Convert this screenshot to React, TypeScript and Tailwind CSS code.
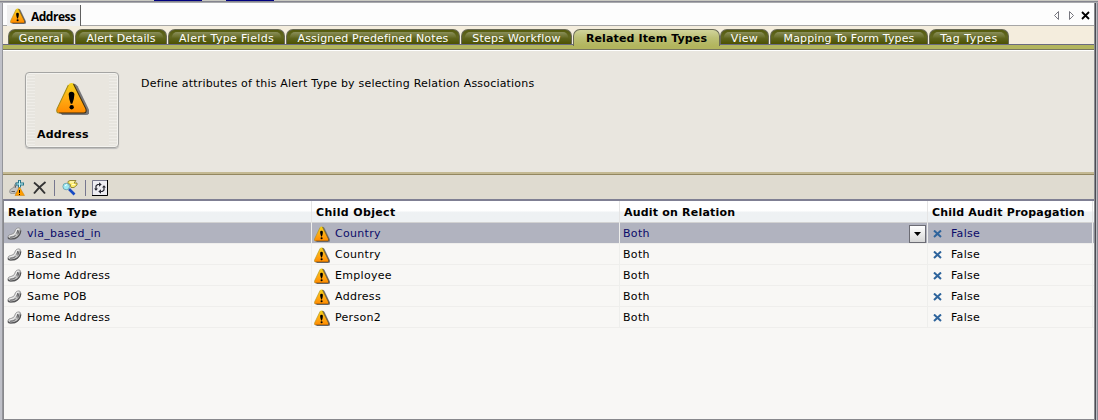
import React from "react";

function Warning({ className }: { className: string }) {
  return (
    <svg viewBox="0 0 32 32" className={className}>
      <defs>
        <linearGradient id="amber" x1="0" y1="0" x2="0" y2="1">
          <stop offset="0" stopColor="#f2d21c" />
          <stop offset="0.5" stopColor="#ffae14" />
          <stop offset="1" stopColor="#ff8a00" />
        </linearGradient>
      </defs>
      <path d="M15 2Q18 0 21 4L32 27Q33 32 29 32H6L3 29Z" fill="#77777b" />
      <path d="M15 1Q17 1 18 3L29 26Q30 30 27 30H3Q0 30 1 26L12 3Q13 1 15 1Z" fill="url(#amber)" />
      <path d="M17 2L29 26Q30 30 27 30H3" fill="none" stroke="#3a2c10" strokeWidth="1" />
      <path d="M12 3L1 26Q0 30 3 30" fill="none" stroke="#a08a18" strokeWidth="1" />
      <path d="M12.3 12Q12.3 9.5 15 9.5T17.8 12Q17.8 16 15.8 21H14.3Q12.3 16 12.3 12Z" fill="#000" />
      <circle cx="15.2" cy="24.500" r="2.1" fill="#000" />
    </svg>
  );
}

function Chain({ className }: { className: string }) {
  return (
    <svg viewBox="0 0 15 13" className={className} fill="none">
      <path d="M1 9.200Q1.500 7.500 4 7.500L7 6L8.500 2.500Q9.500 .8 12 .8Q14 1 13.800 4Q13.500 7.500 11 10Q8 12.300 3.500 12.300Q.3 12 1 9.200Z" fill="#c3c3c3" stroke="#8b8b8d" strokeWidth=".7" />
      <path d="M1 10.500Q1.500 12.200 4 12Q8.500 12 10.500 10Q13.500 7.500 13.700 3.500" stroke="#555557" strokeWidth="1.200" />
      <path d="M3 10.200Q6.500 10.500 8.500 8.500M10.800 3L9.800 6.500M12 3.500L10.800 7.500" stroke="#555557" strokeWidth=".9" />
      <path d="M2.500 9L7 7.800L9 4.500L10 2.200H12" stroke="#f6f6f6" strokeWidth=".9" />
    </svg>
  );
}

function Tab({ label, className, active = false }: { label: string; className: string; active?: boolean }) {
  return (
    <div
      className={`relative shrink-0 rounded-t-[7px] border border-b-0 border-[#686957] text-center leading-[17px] whitespace-nowrap ${
        active
          ? "z-10 h-[17px] bg-linear-to-b from-[#d1d49b] via-[#bcc075] to-[#b2b55d] font-bold text-black"
          : "h-[15px] bg-linear-to-b from-[#555b0d] via-[#626821] to-[#4c5100] text-white"
      } ${className}`}
    >
      {!active && <span className="absolute inset-x-[3px] top-[2px] h-[6px] rounded-t-[5px] bg-linear-to-b from-white/30 to-transparent" />}
      <span className="relative">{label}</span>
    </div>
  );
}

const rows = [
  ["vla_based_in", "Country"],
  ["Based In", "Country"],
  ["Home Address", "Employee"],
  ["Same POB", "Address"],
  ["Home Address", "Person2"],
];

const columns = "grid grid-cols-[308px_308px_308px_165px]";

export default function App() {
  return (
    <div className="flex h-[420px] w-[1098px] flex-col overflow-hidden bg-[#bfc0c8] font-['DejaVu_Sans',sans-serif] text-[11px] text-black">
      <div className="flex h-px shrink-0 bg-[#c9c9c1]">
        <div className="ml-[154px] h-px w-[48px] bg-[#000080]" />
        <div className="ml-[24px] h-px w-[48px] bg-[#000080]" />
      </div>
      <div className="h-[2px] shrink-0 border-b border-[#a9aaad] bg-[#85858f]" />
      <div className="flex min-h-0 flex-1">
        <div className="w-[2px] shrink-0 bg-[#bfc0c8]" />
        <div className="w-px shrink-0 bg-[#94959a]" />
        <div className="flex w-[1091px] shrink-0 flex-col">
          <div className="flex h-[23px] shrink-0 justify-between border-b border-[#a6a6a6] bg-[#fdfdfd]">
            <div className="mt-[2px] ml-[4px] flex h-[21px] w-[74px] border-r border-[#606060] bg-[#efefef] pl-[3px]">
              <Warning className="mt-[3px] h-[16px] w-[16px] shrink-0" />
              <span className="ml-[5px] font-['Open_Sans',sans-serif] text-[12px] leading-[24px] font-bold tracking-[-0.5px]">Address</span>
            </div>
            <svg className="mt-[7px] mr-[4px] h-[11px] w-[37px]" viewBox="0 0 37 11" fill="none">
              <path d="M5.500 1.500V9.500L1.500 5.500ZM16.500 1.500V9.500L20.500 5.500Z" stroke="#77777f" />
              <path d="M29 2L36 9M36 2L29 9" stroke="#000" strokeWidth="1.800" />
            </svg>
          </div>
          <div className="flex h-[19px] shrink-0 items-start border-b border-[#6a6a80] bg-[#f4eddd] pt-[3px] pl-[5px]">
            <Tab label="General" className="w-[66px] tracking-[0.15px]" />
            <Tab label="Alert Details" className="ml-px w-[92px] tracking-[0.1px]" />
            <Tab label="Alert Type Fields" className="ml-px w-[117px] tracking-[0.33px]" />
            <Tab label="Assigned Predefined Notes" className="ml-px w-[174px] tracking-[0.14px]" />
            <Tab label="Steps Workflow" className="ml-px w-[111px] tracking-[0.27px]" />
            <Tab label="Related Item Types" active className="ml-px w-[147px] tracking-[0.13px]" />
            <Tab label="View" className="w-[49px] tracking-[0.3px]" />
            <Tab label="Mapping To Form Types" className="ml-px w-[158px] tracking-[0.14px]" />
            <Tab label="Tag Types" className="ml-px w-[80px] tracking-[0.5px]" />
          </div>
          <div className="h-[5px] shrink-0 border-b border-[#77765f] bg-[#b2b55d]" />
          <div className="flex h-[122px] shrink-0 border-t border-white bg-[#e9e6df]">
            <div className="mt-[21px] ml-[22px] h-[76px] w-[94px] rounded-[4px] border border-[#a5a5a3] bg-[repeating-linear-gradient(0deg,#e7e5df_0px,#e7e5df_2px,#efede8_2px,#efede8_3px)] p-px shadow-[0_1px_1px_#bbb,inset_0_0_0_1px_#f4f3ef]">
              <div className="mx-[8px] flex h-full flex-col bg-[#e9e6df]">
                <Warning className="mt-[8px] ml-[21px] h-[33px] w-[33px] shrink-0" />
                <span className="mt-[13px] ml-[2px] leading-[14px] font-bold tracking-[0.2px]">Address</span>
              </div>
            </div>
            <div className="mt-[26px] ml-[22px] leading-[14px] tracking-[0.195px]">Define attributes of this Alert Type by selecting Relation Associations</div>
          </div>
          <div className="h-[3px] shrink-0 border-b border-[#938760] bg-[#c4b993]" />
          <div className="flex h-[24px] shrink-0 items-center bg-[#dfdbd0] pt-px pl-[6px]">
            <svg className="h-[16px] w-[16px]" viewBox="0 0 16 16" fill="none">
              <path d="M.8 11Q.8 9 3 8.500L5 7L6 4Q7 2 9 3L10 8L8 13L3.500 13.500Q0 13.500 .8 11Z" fill="#c3c3c1" stroke="#8b8b89" strokeWidth=".8" />
              <path d="M2.500 11.500H6M7 5L6 8" stroke="#5f5f5f" />
              <path d="M10.500 0V7.500M6.500 4H15" stroke="#28768a" strokeWidth="3" />
              <path d="M10.500 .8V7M7.500 4H14" stroke="#c8fbff" />
              <path d="M10.500 7L15.500 15.500H6Z" fill="#ff9d00" stroke="#c47d05" strokeWidth=".5" />
              <path d="M10.500 10V13M10.500 14V15" stroke="#000" />
            </svg>
            <svg className="ml-[8px] h-[14px] w-[14px]" viewBox="0 0 14 14" fill="none">
              <path d="M1 1.500Q7 6 12 12.500M12.500 1Q6 6 1 12.500" stroke="#333" strokeWidth="1.900" />
            </svg>
            <div className="ml-[7px] h-[16px] w-px bg-[#77778f]" />
            <svg className="ml-[7px] h-[17px] w-[16px]" viewBox="0 0 16 17" fill="none">
              <path d="M6 2.500L8 1.500H14L12 4H15V6L12 8.500H9L8 5H6Z" fill="#ffee70" stroke="#80751d" strokeWidth=".8" />
              <path d="M8 3H12M10 5.500H13" stroke="#fffbd0" />
              <path d="M7 10L12.500 15.500" stroke="#174bc3" strokeWidth="2.600" />
              <circle cx="4.200" cy="7.500" r="3.300" fill="#9feaf3" stroke="#629aa6" strokeWidth=".8" />
              <path d="M3 7L5 5.500" stroke="#fff" />
            </svg>
            <div className="ml-[7px] h-[16px] w-px bg-[#77778f]" />
            <svg className="ml-[6px] h-[16px] w-[16px]" viewBox="0 0 16 16" fill="none">
              <path d="M.5 .5H15.500V15.500H.5Z" fill="#eeedf2" stroke="#77778a" />
              <path d="M0 15.500H15.500V0" stroke="#000" />
              <path d="M7 4.500H5.500L4 6V10M8 11.500H10.500L12 10V6" stroke="#292933" strokeWidth="1.200" />
              <path d="M7 2.300V6.700L9.700 4.500ZM9 9.300V13.700L6.300 11.500ZM2 8.500H6L4 10.800ZM10 7.500H14L12 5.200Z" fill="#292933" />
            </svg>
          </div>
          <div className="flex h-[221px] shrink-0 flex-col border-t-[2px] border-b border-l border-[#88888c] border-t-[#7f7f93] bg-[#f8f7f5]">
            <div className={`${columns} h-[22px] shrink-0 border-b border-[#d2d2d2] bg-linear-to-b from-white from-45% to-[#eef1f3] to-55% leading-[23px] font-bold`}>
              <div className="border-r border-[#e5e5e5] pl-[4px] tracking-[0.4px]">Relation Type</div>
              <div className="border-r border-[#e5e5e5] pl-[4px] tracking-[0.35px]">Child Object</div>
              <div className="border-r border-[#e5e5e5] pl-[4px] tracking-[0.2px]">Audit on Relation</div>
              <div className="border-r border-[#e5e5e5] pl-[4px] tracking-[0.2px] whitespace-nowrap">Child Audit Propagation</div>
            </div>
            {rows.map(([relation, child], i) => (
              <div
                key={i}
                className={`${columns} h-[21px] shrink-0 border-b border-[#efeeec] leading-[20px] tracking-[0.3px] ${i === 0 ? "bg-[#b1b3bf] text-[#0b0b69]" : ""}`}
              >
                <div className="flex items-center border-r border-[#eeeeec]">
                  <Chain className="ml-[3px] h-[13px] w-[15px]" />
                  <span className="mt-px ml-[5px]">{relation}</span>
                </div>
                <div className="flex items-center border-r border-[#eeeeec]">
                  <Warning className="ml-[2px] h-[16px] w-[16px]" />
                  <span className="mt-px ml-[5px]">{child}</span>
                </div>
                <div className="flex items-center justify-between border-r border-[#eeeeec]">
                  <span className="mt-px ml-[3px]">Both</span>
                  {i === 0 && (
                    <div className="mr-px flex h-[18px] w-[17px] items-center justify-center border border-[#6c6c74] bg-linear-to-b from-white to-[#d7d7d7]">
                      <svg className="h-[4px] w-[7px]" viewBox="0 0 7 4">
                        <path d="M0 0H7L3.500 4Z" />
                      </svg>
                    </div>
                  )}
                </div>
                <div className="flex items-center border-r border-[#eeeeec]">
                  <svg className="ml-[5px] h-[8px] w-[9px]" viewBox="0 0 9 8">
                    <path d="M1 .5L8 7M8 .5L1 7" stroke="#2e649c" strokeWidth="2" />
                  </svg>
                  <span className="mt-px ml-[9px]">False</span>
                </div>
              </div>
            ))}
          </div>
        </div>
        <div className="w-px shrink-0 bg-[#8b8c90]" />
        <div className="w-px shrink-0 bg-[#4b4c52]" />
        <div className="w-px shrink-0 bg-[#b9bac2]" />
        <div className="w-px shrink-0 bg-[#8b8c94]" />
      </div>
    </div>
  );
}
